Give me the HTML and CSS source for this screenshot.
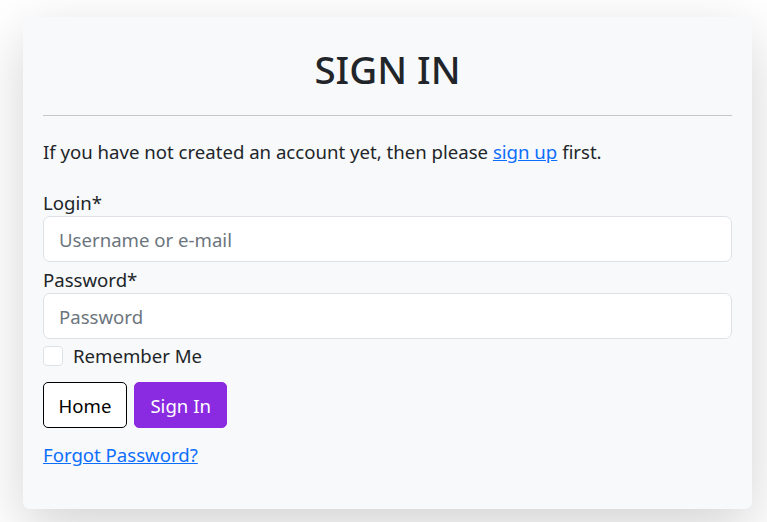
FILE: index.html
```html
<!DOCTYPE html>
<html lang="en">
<head>
<meta charset="utf-8">
<title>Sign In</title>
<link rel="stylesheet" href="styles.css">
</head>
<body>
<main class="page">
  <section class="card">
    <h1 class="title">SIGN IN</h1>
    <hr class="rule">
    <p class="intro">If you have not created an account yet, then please <a href="#" class="link">sign up</a> first.</p>
    <form class="form">
      <label class="label" for="login">Login*</label>
      <input class="input" id="login" type="text" placeholder="Username or e-mail">
      <label class="label" for="password">Password*</label>
      <input class="input" id="password" type="password" placeholder="Password">
      <label class="check">
        <input type="checkbox" class="check-box">
        <span class="check-text">Remember Me</span>
      </label>
      <div class="actions">
        <button type="button" class="btn btn-home">Home</button>
        <button type="submit" class="btn btn-primary">Sign In</button>
      </div>
      <a href="#" class="link forgot">Forgot Password?</a>
    </form>
  </section>
</main>
</body>
</html>
```

FILE: styles.css
```css
* { box-sizing: border-box; }
html, body { margin: 0; padding: 0; background: #fff; }
body {
  font-family: "Noto Sans", "Open Sans", sans-serif;
  font-size: 18.6px;
  color: #212529;
}
.page {
  padding: 17px 15px 13px 23px;
}
.card {
  background: #f8f9fa;
  border-radius: 7px;
  box-shadow: 0 19px 58px rgba(0, 0, 0, 0.175);
  padding: 20px 20px 40px 20px;
}
.title {
  margin: 0;
  text-align: center;
  font-size: 38.5px;
  font-weight: 500;
  line-height: 52px;
  height: 78px;
  padding-top: 6px;
}
.rule {
  margin: 0;
  border: 0;
  border-top: 1px solid #c6c7c8;
}
.intro {
  margin: 0;
  padding-top: 22px;
  line-height: 28px;
  height: 72px;
}
.link { color: #0d6efd; text-decoration: underline; }
.form { display: flex; flex-direction: column; align-items: flex-start; }
.label {
  display: block;
  line-height: 29px;
  height: 28px;
}
.input {
  width: 100%;
  height: 46px;
  border: 1px solid #dee2e6;
  border-radius: 7px;
  background: #fff;
  padding: 0 15px;
  font-family: inherit;
  font-size: 18.6px;
  color: #212529;
  margin-bottom: 3px;
}
.input::placeholder { color: #6c757d; }
.check {
  display: flex;
  align-items: center;
  gap: 10px;
  margin-top: 4px;
  height: 20px;
}
.check-box {
  appearance: none;
  -webkit-appearance: none;
  margin: 0;
  width: 20px;
  height: 20px;
  border: 1px solid #dee2e6;
  border-radius: 4px;
  background: #fff;
}
.check-text { line-height: 20px; }
.actions {
  display: flex;
  gap: 7px;
  margin-top: 16px;
}
.btn {
  height: 46px;
  padding: 0 14.5px;
  font-family: inherit;
  font-size: 18.6px;
  border-radius: 5px;
  cursor: pointer;
}
.btn-home {
  background: #fff;
  border: 1px solid #000;
  color: #000;
}
.btn-primary {
  background: #8a2be2;
  border: 1px solid #8a2be2;
  color: #fff;
  padding: 0 15.5px;
}
.forgot {
  margin-top: 13px;
  line-height: 28px;
}
```
